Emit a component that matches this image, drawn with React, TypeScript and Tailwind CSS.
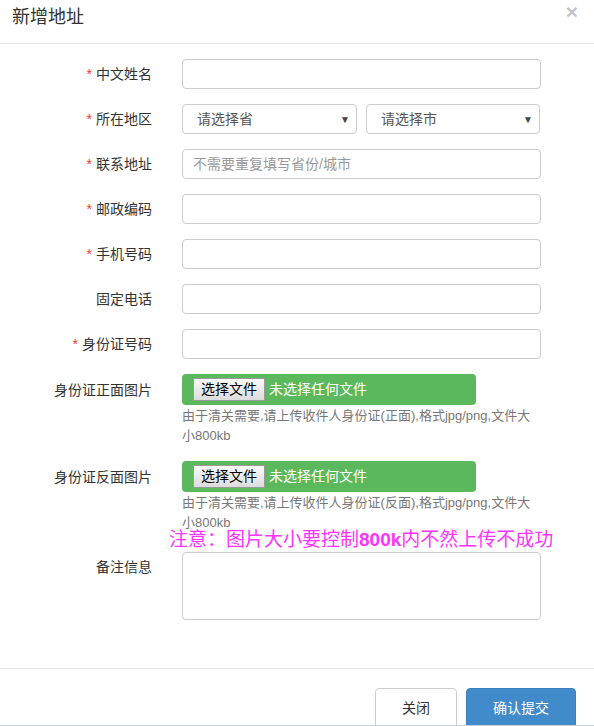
import React from "react";

const font = { fontFamily: '"Liberation Sans", "Noto Sans CJK SC", sans-serif' };

function Label({ text, required }: { text: string; required?: boolean }) {
	return (
		<div className="w-[152px] shrink-0 text-right text-[14px] leading-[30px] text-[#333]">
			{required && <span className="mr-[4px] text-[#f33]">*</span>}
			{text}
		</div>
	);
}

function TextInput({ placeholder }: { placeholder?: string }) {
	return (
		<input
			placeholder={placeholder}
			className="h-[30px] w-[359px] rounded-[4px] border border-[#ccc] px-[10px] text-[14px] text-[#555] outline-none placeholder:text-[#999]"
		/>
	);
}

function FakeSelect({ text, width }: { text: string; width: string }) {
	return (
		<div className={`flex h-[30px] ${width} items-center justify-between rounded-[4px] border border-[#ccc] pl-[14px] pr-[6px] text-[14px] text-[#555]`}>
			<span>{text}</span>
			<span className="text-[10px] text-[#444]">▼</span>
		</div>
	);
}

function FileField({ label, side }: { label: string; side: string }) {
	return (
		<div className="mb-[15px] flex gap-[30px]">
			<div className="w-[152px] shrink-0 pt-[1px] text-right text-[14px] leading-[30px] text-[#333]">{label}</div>
			<div className="w-[359px]">
				<div className="flex h-[31px] w-[294px] items-center rounded-[4px] bg-[#5cb85c] pl-[11px]">
					<button type="button" className="h-[23px] w-[72px] border border-[#999] bg-gradient-to-b from-[#fafafa] to-[#dcdcdc] text-[14px] leading-[21px] text-black">
						选择文件
					</button>
					<span className="ml-[4px] text-[14px] text-white">未选择任何文件</span>
				</div>
				<p className="pt-[1px] text-[13px] leading-[20px] text-[#777]">由于清关需要,请上传收件人身份证({side}),格式jpg/png,文件大小800kb</p>
			</div>
		</div>
	);
}

export default function App() {
	return (
		<div style={font} className="flex h-[726px] w-full flex-col overflow-hidden bg-white">
			{/* header */}
			<div className="flex h-[44px] shrink-0 items-start justify-between border-b border-[#e5e5e5] pl-[12px] pr-[16px]">
				<h4 className="pt-[6px] text-[18px] leading-[22px] text-[#333]">新增地址</h4>
				<button className="pt-[1px] text-[21px] font-bold leading-[22px] text-[#c4c4c4]">×</button>
			</div>

			{/* body */}
			<div className="flex-1 pt-[15px]">
				<div className="mb-[15px] flex gap-[30px]">
					<Label text="中文姓名" required />
					<TextInput />
				</div>
				<div className="mb-[15px] flex gap-[30px]">
					<Label text="所在地区" required />
					<div className="flex gap-[9px]">
						<FakeSelect text="请选择省" width="w-[175px]" />
						<FakeSelect text="请选择市" width="w-[174px]" />
					</div>
				</div>
				<div className="mb-[15px] flex gap-[30px]">
					<Label text="联系地址" required />
					<TextInput placeholder="不需要重复填写省份/城市" />
				</div>
				<div className="mb-[15px] flex gap-[30px]">
					<Label text="邮政编码" required />
					<TextInput />
				</div>
				<div className="mb-[15px] flex gap-[30px]">
					<Label text="手机号码" required />
					<TextInput />
				</div>
				<div className="mb-[15px] flex gap-[30px]">
					<Label text="固定电话" />
					<TextInput />
				</div>
				<div className="mb-[15px] flex gap-[30px]">
					<Label text="身份证号码" required />
					<TextInput />
				</div>

				<FileField label="身份证正面图片" side="正面" />
				<FileField label="身份证反面图片" side="反面" />

				{/* note */}
				<div className="-mt-[18px] ml-[169px] text-[19px] leading-[20px] text-[#f3f]">
					注意：图片大小要控制<b>800k</b>内不然上传不成功
				</div>

				<div className="mt-[2px] flex gap-[30px]">
					<Label text="备注信息" />
					<textarea className="h-[68px] w-[359px] resize-none rounded-[4px] border border-[#ccc] outline-none" />
				</div>
			</div>

			{/* footer */}
			<div className="flex h-[57px] shrink-0 items-start justify-end gap-[9px] overflow-hidden border-t border-[#e5e5e5] pr-[18px] pt-[19px]">
				<button className="h-[40px] w-[82px] rounded-[4px] border border-[#ccc] bg-white text-[14px] text-[#333]">关闭</button>
				<button className="h-[40px] w-[110px] rounded-[4px] border border-[#3a80c0] bg-[#428bca] text-[14px] text-white">确认提交</button>
			</div>
			<div className="h-[1px] shrink-0 bg-[#c5d0de]" />
		</div>
	);
}
